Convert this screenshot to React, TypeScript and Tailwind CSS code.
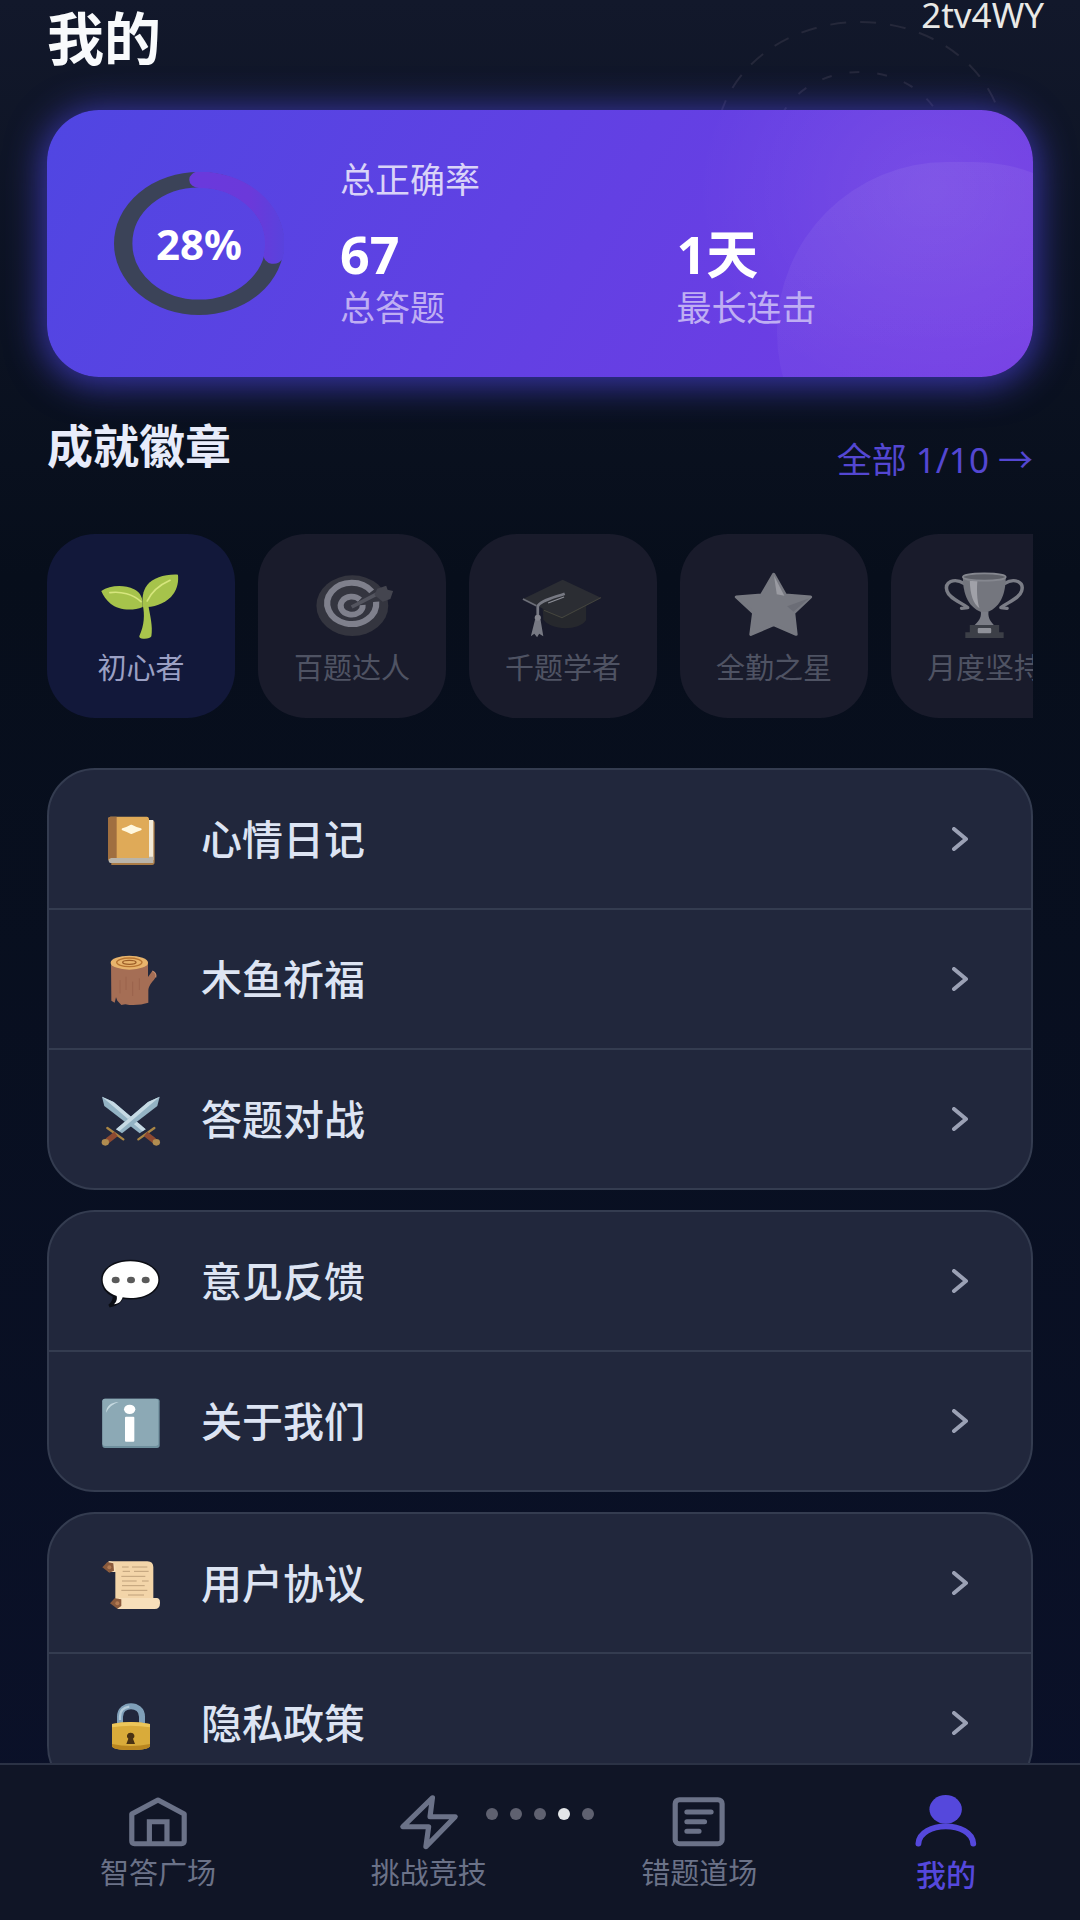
import type { ReactNode } from "react";

type Badge = { label: string; icon: ReactNode; active?: boolean };
type Entry = { label: string; icon: ReactNode };

function BadgeArt({ box, children }: { box: string; children: ReactNode }) {
  return (
    <svg viewBox={box} preserveAspectRatio="none" className="h-[66px] w-[76px] overflow-visible" fill="none" aria-hidden="true">
      {children}
    </svg>
  );
}

function RowArt({ box, children }: { box: string; children: ReactNode }) {
  return (
    <svg viewBox={box} className="h-[54px] w-[60px] shrink-0 overflow-visible" fill="none" aria-hidden="true">
      {children}
    </svg>
  );
}

function NavArt({ box, children }: { box: string; children: ReactNode }) {
  return (
    <svg
      viewBox={box}
      preserveAspectRatio="none"
      className="h-[53px] w-[60px] overflow-visible"
      fill="none"
      stroke="currentColor"
      strokeWidth="15"
      strokeLinecap="round"
      strokeLinejoin="round"
      aria-hidden="true"
    >
      {children}
    </svg>
  );
}

const seedling = (
  <BadgeArt box="298 516 220 198">
    <path d="M413 612 C419 640 418 672 403 706 Q403 713 414 713 Q434 714 438 706 C443 676 434 642 429 612 Z" fill="#a9c54c" />
    <path d="M293 570 C318 553 358 550 388 565 C406 574 415 592 413 618 C380 632 341 626 320 608 C307 597 299 584 293 570 Z" fill="#a6c34b" />
    <path d="M515 521 C478 519 443 530 426 552 C413 570 410 592 414 617 C446 622 484 605 501 580 C514 560 517 540 515 521 Z" fill="#a6c34b" />
    <path d="M318 575 C350 570 385 580 408 602" stroke="#d6e67d" strokeWidth="5" strokeLinecap="round" />
    <path d="M492 538 C462 552 438 574 426 600" stroke="#d6e67d" strokeWidth="5" strokeLinecap="round" />
  </BadgeArt>
);

const target = (
  <BadgeArt box="909 516 220 198">
    <ellipse cx="1020" cy="614" rx="104" ry="91" fill="#34353f" />
    <path d="M1076 571 A71 62 0 1 0 1089 602" stroke="#7f808c" strokeWidth="18" />
    <path d="M1042 596 A32 27 0 1 0 1050 612" stroke="#7f808c" strokeWidth="17" />
    <path d="M1018 618 L1100 574" stroke="#54555f" strokeWidth="11" />
    <path d="M1084 582 L1092 563 L1118 554 L1122 566 L1138 570 L1130 594 L1108 602 Z" fill="#44454f" />
  </BadgeArt>
);

const gradCap = (
  <BadgeArt box="-47 516 220 198">
    <path d="M4 620 L6 655 C24 688 108 692 130 657 L130 610 Z" fill="#26282d" />
    <path d="M-53 594 L62 536 L173 590 L60 650 Z" fill="#2b2d33" />
    <path d="M8 628 L60 650 L173 590" stroke="#45463f" strokeWidth="3" />
    <path d="M-53 594 L-14 614" stroke="#6c6e78" strokeWidth="5" />
    <path d="M68 578 C30 592 -4 600 -10 616 L-10 660" stroke="#777983" strokeWidth="8" />
    <path d="M66 588 L20 606" stroke="#8b8d96" strokeWidth="4" />
    <path d="M-18 656 L-2 656 L6 706 L-6 698 L-12 709 L-20 698 L-30 706 Z" fill="#777983" />
    <circle cx="-10" cy="650" r="9" fill="#85868f" />
  </BadgeArt>
);

const star = (
  <BadgeArt box="564 516 220 198">
    <path
      d="M673 520 L707 582 L780 588 L731 636 L738 700 L673 671 L607 700 L615 636 L565 588 L638 582 Z"
      fill="#777981"
      stroke="#777981"
      strokeWidth="9"
      strokeLinejoin="round"
    />
    <path d="M674 524 L704 584 L682 580 Z" fill="#9a9ba2" />
    <path d="M776 592 L730 632 L712 616 Z" fill="#6b6d76" />
  </BadgeArt>
);

const trophy = (
  <BadgeArt box="1176 516 220 198">
    <path d="M1226 548 C1196 528 1168 544 1176 570 C1182 592 1216 604 1234 618 M1218 622 L1236 620" stroke="#7b7d86" strokeWidth="10" strokeLinecap="round" />
    <path d="M1342 548 C1372 528 1400 544 1392 570 C1386 592 1352 604 1334 618 M1350 622 L1332 620" stroke="#7b7d86" strokeWidth="10" strokeLinecap="round" />
    <path d="M1222 528 C1222 580 1238 624 1284 636 C1330 624 1346 580 1346 528 Z" fill="#74767e" />
    <path d="M1242 540 C1243 580 1252 608 1270 622 C1262 596 1262 560 1264 540 Z" fill="#a0a1a8" />
    <ellipse cx="1284" cy="528" rx="62" ry="11" fill="#5e6068" stroke="#85878f" strokeWidth="5" />
    <path d="M1274 632 L1296 632 C1294 652 1304 664 1314 674 L1254 674 C1266 662 1276 652 1274 632 Z" fill="#7b7d86" />
    <path d="M1242 672 H1327 V694 H1340 V711 H1229 V694 H1242 Z" fill="#3c3f47" />
    <rect x="1265" y="681" width="39" height="16" rx="3" fill="#8f9199" />
  </BadgeArt>
);

const notebook = (
  <RowArt box="183 156 180 162">
    <path d="M214 182 H338 Q344 182 344 188 V306 Q344 315 336 315 H214 Z" fill="#a97b46" />
    <path d="M322 180 H340 V300 H322 Z" fill="#f2ead8" />
    <path d="M206 290 H340 V309 H212 Q204 309 206 290 Z" fill="#b9b4aa" />
    <path d="M212 170 H320 Q327 170 327 178 V294 H214 Q204 296 204 304 V178 Q204 170 212 170 Z" fill="#dfaa58" />
    <path d="M212 170 H230 V294 H214 Q204 296 204 304 V178 Q204 170 212 170 Z" fill="#a06f40" />
    <path d="M248 208 Q262 204 274 197 Q286 204 302 208 Q288 213 274 219 Q262 213 248 208 Z" fill="#fff8df" stroke="#fff8df" strokeWidth="6" strokeLinejoin="round" />
  </RowArt>
);

const log = (
  <RowArt box="183 576 180 162">
    <path d="M213 607 H324 V651 L337 633 Q350 638 347 652 C340 664 327 674 325 690 V728 Q300 737 268 735 L256 733 L244 735 L232 722 L228 712 L224 728 L214 722 Z" fill="#a56e55" />
    <path d="M240 660 V700 M258 650 V690 M278 665 V708 M298 655 V690" stroke="#9a634c" strokeWidth="3" />
    <path d="M337 633 Q350 638 347 652" stroke="#c48b6d" strokeWidth="4" />
    <ellipse cx="268" cy="608" rx="56" ry="21" fill="#e8b46c" />
    <ellipse cx="268" cy="607" rx="38" ry="13" stroke="#b87532" strokeWidth="4" />
    <ellipse cx="268" cy="607" rx="20" ry="6" stroke="#9d5e28" strokeWidth="4" />
  </RowArt>
);

function Sword() {
  return (
    <g>
      <path d="M359 1010 L352 1038 L246 1120 L228 1108 L324 1026 Z" fill="#93b3c4" />
      <path d="M359 1010 L238 1114 L228 1108 L324 1026 Z" fill="#c6dae4" />
      <path d="M202 1104 L250 1138" stroke="#a98544" strokeWidth="7" strokeLinecap="round" />
      <path d="M228 1122 L202 1142" stroke="#8e4a31" strokeWidth="17" />
      <ellipse cx="196" cy="1147" rx="11" ry="10" fill="#b08c50" />
    </g>
  );
}

const swords = (
  <RowArt box="183 996 180 162">
    <g transform="matrix(-1 0 0 1 545 0)">
      <Sword />
    </g>
    <Sword />
  </RowArt>
);

const speech = (
  <RowArt box="183 162 180 162">
    <path
      d="M271 184 C320 184 355 208 355 239 C355 270 320 294 271 294 Q258 294 246 292 C242 306 228 314 208 318 C220 308 224 298 222 287 C201 277 188 260 188 239 C188 208 222 184 271 184 Z"
      fill="#0b0d14"
      stroke="#0b0d14"
      strokeWidth="9"
    />
    <path
      d="M271 184 C320 184 355 208 355 239 C355 270 320 294 271 294 Q258 294 248 292 C244 304 236 312 222 313 C230 304 232 296 230 288 C204 279 188 262 188 239 C188 208 222 184 271 184 Z"
      fill="#ffffff"
    />
    <ellipse cx="227" cy="240" rx="12" ry="10" fill="#5a5a5a" />
    <ellipse cx="273" cy="240" rx="12" ry="10" fill="#5a5a5a" />
    <ellipse cx="317" cy="240" rx="12" ry="10" fill="#5a5a5a" />
  </RowArt>
);

const info = (
  <RowArt box="183 582 180 162">
    <rect x="187" y="596" width="172" height="148" rx="8" fill="#6e8f9d" />
    <rect x="187" y="596" width="168" height="142" rx="8" fill="#8ca9b5" />
    <path d="M198 638 Q200 608 236 606 Q210 614 198 638 Z" fill="#c6d9e0" />
    <ellipse cx="269" cy="628" rx="17" ry="14" fill="#ffffff" />
    <rect x="255" y="650" width="28" height="75" rx="3" fill="#ffffff" />
  </RowArt>
);

const scroll = (
  <RowArt box="183 168 180 162">
    <path d="M206 184 H322 Q340 184 340 202 V304 H226 V216 H206 Z" fill="#f3d5a9" />
    <path d="M236 294 H350 Q360 294 360 308 Q360 327 344 327 H232 Z" fill="#f7dfba" />
    <path d="M206 184 Q222 184 226 200 V216 H204 Z" fill="#f7dfba" />
    <path d="M187 202 L202 186 L220 190 L222 212 L208 218 Z" fill="#8a5a3c" />
    <path d="M210 310 L224 295 L244 298 V318 L232 326 Z" fill="#8a5a3c" />
    <circle cx="208" cy="202" r="6" fill="#b27a52" />
    <circle cx="232" cy="310" r="6" fill="#b27a52" />
    <path d="M246 201 H266 M276 201 H322 M248 214 H270 M282 214 H326 M244 229 H316 M246 243 H290 M306 243 H326 M246 257 H314 M244 271 H322 M264 285 H312" stroke="#bfa07a" strokeWidth="3" />
  </RowArt>
);

const lock = (
  <RowArt box="183 588 180 162">
    <path d="M240 676 V650 C240 608 306 608 306 650 V676" stroke="#7f9fb8" strokeWidth="18" />
    <path d="M240 660 V650 C240 632 252 622 268 620" stroke="#b3cad9" strokeWidth="7" />
    <path d="M216 672 Q272 660 330 672 V738 Q326 750 272 750 Q218 750 216 738 Z" fill="#d9ab3a" />
    <path d="M216 672 Q272 660 330 672 V682 Q272 672 216 682 Z" fill="#ecc65a" />
    <path d="M216 732 Q272 744 330 732 V738 Q326 750 272 750 Q218 750 216 738 Z" fill="#b98620" />
    <path d="M272 698 A11 10 0 0 1 279 716 L285 732 H259 L265 716 A11 10 0 0 1 272 698 Z" fill="#4a3213" />
  </RowArt>
);

const badges: Badge[] = [
  { label: "初心者", icon: seedling, active: true },
  { label: "百题达人", icon: target },
  { label: "千题学者", icon: gradCap },
  { label: "全勤之星", icon: star },
  { label: "月度坚持", icon: trophy },
];

const groups: Entry[][] = [
  [
    { label: "心情日记", icon: notebook },
    { label: "木鱼祈福", icon: log },
    { label: "答题对战", icon: swords },
  ],
  [
    { label: "意见反馈", icon: speech },
    { label: "关于我们", icon: info },
  ],
  [
    { label: "用户协议", icon: scroll },
    { label: "隐私政策", icon: lock },
  ],
];

const tabs: Badge[] = [
  {
    label: "智答广场",
    icon: (
      <NavArt box="373 135 174 159">
        <path d="M384 192 L460 150 L536 192 V273 Q536 281 528 281 H392 Q384 281 384 273 Z" />
        <path d="M435 279 V215 H486 V279" strokeLinejoin="miter" />
      </NavArt>
    ),
  },
  {
    label: "挑战竞技",
    icon: (
      <NavArt box="1157 135 174 159">
        <path d="M1254 143 L1168 230 H1243 L1235 290 L1320 200 H1247 Z" />
      </NavArt>
    ),
  },
  {
    label: "错题道场",
    icon: (
      <NavArt box="373 135 174 159">
        <rect x="391" y="149" width="136" height="132" rx="12" />
        <path d="M425 186 H495 M425 215 H476 M425 244 H460" />
      </NavArt>
    ),
  },
  {
    label: "我的",
    active: true,
    icon: (
      <NavArt box="1090 135 174 159">
        <ellipse cx="1176" cy="178" rx="47" ry="43" fill="currentColor" stroke="none" />
        <path d="M1097 281 C1101 212 1252 212 1256 281" strokeWidth="17" />
      </NavArt>
    ),
  },
];

function AccuracyRing({ percent }: { percent: number }) {
  const length = 2 * Math.PI * 66;
  return (
    <div className="relative flex h-[143px] w-[170px] shrink-0 items-center justify-center">
      <svg viewBox="0 0 148 148" preserveAspectRatio="none" className="absolute inset-0 h-full w-full" fill="none" aria-hidden="true">
        <defs>
          <linearGradient id="ring" gradientUnits="userSpaceOnUse" x1="0" y1="74" x2="0" y2="148">
            <stop offset="0" stopColor="#6a39dc" />
            <stop offset="0.6" stopColor="#6b39da" />
            <stop offset="1" stopColor="#5942dd" />
          </linearGradient>
        </defs>
        <circle cx="74" cy="74" r="66" stroke="#3b4358" strokeWidth="16" />
        <circle
          cx="74"
          cy="74"
          r="66"
          stroke="url(#ring)"
          strokeWidth="17"
          strokeLinecap="round"
          strokeDasharray={`${(length * percent) / 100} ${length}`}
          transform="rotate(-90 74 74)"
        />
      </svg>
      <span className="relative text-[42px] leading-[48px] font-bold text-white">{percent}%</span>
    </div>
  );
}

function Stat({ value, label }: { value: string; label: string }) {
  return (
    <div className="flex-1">
      <div className="text-[52px] leading-[64px] font-bold text-white">{value}</div>
      <div className="text-[35px] leading-[44px] text-[#bfaef3]">{label}</div>
    </div>
  );
}

export default function App() {
  return (
    <div className="relative flex h-screen flex-col overflow-hidden bg-linear-to-b from-[#12182b] via-[#070e1b] via-30% to-[#0b112a] font-['Noto_Sans','Noto_Sans_CJK_SC',sans-serif]">
      <svg viewBox="0 0 300 260" className="absolute top-[15px] right-[70px] h-[260px] w-[300px]" fill="none" stroke="#25283a" strokeWidth="2" aria-hidden="true">
        <ellipse cx="150" cy="130" rx="144" ry="123" strokeDasharray="16 14" />
        <ellipse cx="150" cy="130" rx="86" ry="73" strokeDasharray="10 18" />
      </svg>
      <div className="absolute top-0 right-9 text-[35px] leading-[30px] text-[#e9e9e6]">2tv4WY</div>

      <main className="relative min-h-0 flex-1 overflow-y-auto px-[47px] pt-1.5 [scrollbar-width:none]">
        <h1 className="text-[57px] leading-[64px] font-bold text-[#f8fafc]">我的</h1>

        <section className="relative mt-10 flex h-[267px] items-center rounded-[52px] bg-linear-[120deg] from-[#5046e2] to-[#733be4] pl-[67px] shadow-[0_4px_36px_4px_rgba(79,70,229,0.7)]">
          <div className="absolute inset-0 overflow-hidden rounded-[52px]">
            <div className="absolute top-[-130px] right-[-140px] h-[420px] w-[480px] rounded-full bg-radial from-white/8 to-transparent to-70%" />
            <div className="absolute top-[52px] right-[-110px] h-[340px] w-[366px] rounded-full bg-linear-to-b from-white/6 via-white/4 to-white/2" />
          </div>
          <AccuracyRing percent={28} />
          <div className="relative ml-14 flex-1 pr-5">
            <div className="text-[35px] leading-[44px] text-[#d9d3f8]">总正确率</div>
            <div className="mt-5 flex">
              <Stat value="67" label="总答题" />
              <Stat value="1天" label="最长连击" />
            </div>
          </div>
        </section>

        <div className="mt-10 flex h-[63px] items-start justify-between">
          <h2 className="text-[46px] leading-[56px] font-bold text-[#e8ecfa]">成就徽章</h2>
          <a href="#badges" className="self-end text-[35px] leading-[40px] text-[#5447d2]">
            全部 1/10 →
          </a>
        </div>

        <ul id="badges" className="mt-[54px] flex gap-[23px] overflow-hidden">
          {badges.map((b) => (
            <li
              key={b.label}
              className={`flex w-[188px] shrink-0 flex-col items-center rounded-[48px] pt-[39px] pb-[34px] ${b.active ? "bg-[#12183a]" : "bg-[#191b2b]"}`}
            >
              {b.icon}
              <span className={`mt-[13px] text-[29px] leading-[32px] whitespace-nowrap ${b.active ? "text-[#9ba0c4]" : "text-[#4f5363]"}`}>
                {b.label}
              </span>
            </li>
          ))}
        </ul>

        <div className="mt-[50px] flex flex-col gap-5 pb-10">
          {groups.map((group) => (
            <ul key={group[0].label} className="divide-y-2 divide-[#343c50] overflow-hidden rounded-[48px] border-2 border-[#343c50] bg-[#21273c]">
              {group.map((entry) => (
                <li key={entry.label}>
                  <button type="button" className="flex h-[138px] w-full items-center pr-[62px] pl-[52px] text-left">
                    {entry.icon}
                    <span className="ml-10 flex-1 text-[41px] leading-[52px] font-medium text-[#dde4f3]">{entry.label}</span>
                    <svg viewBox="0 0 18 24" className="h-6 w-[18px]" fill="none" stroke="#9ba1b5" strokeWidth="4" strokeLinecap="round" strokeLinejoin="round" aria-hidden="true">
                      <path d="M3 2 L15 12 L3 22" />
                    </svg>
                  </button>
                </li>
              ))}
            </ul>
          ))}
        </div>
      </main>

      <nav className="relative flex shrink-0 items-start justify-between border-t-2 border-[#2b3245] bg-[#101526] px-[100px] pt-[30px] pb-[25px]">
        {tabs.map((t) => (
          <button
            key={t.label}
            type="button"
            className={`flex flex-col items-center gap-[7px] ${t.active ? "px-1 text-[#5548dc]" : "text-[#6b7288]"}`}
          >
            {t.icon}
            <span className={t.active ? "text-[30px] leading-[40px] font-medium" : "text-[29px] leading-[36px]"}>{t.label}</span>
          </button>
        ))}
        <div className="absolute top-[43px] left-1/2 flex -translate-x-1/2 gap-3">
          {[0, 1, 2, 3, 4].map((i) => (
            <span key={i} className={`size-3 rounded-full ${i === 3 ? "bg-[#e4e6e8]" : "bg-[#5f6170]"}`} />
          ))}
        </div>
      </nav>
    </div>
  );
}
